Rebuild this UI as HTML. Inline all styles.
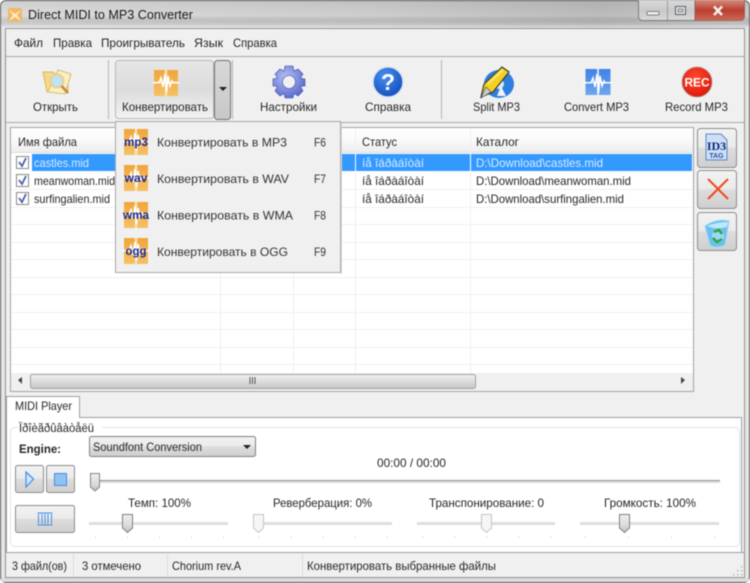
<!DOCTYPE html>
<html><head><meta charset="utf-8"><title>Direct MIDI to MP3 Converter</title>
<style>
html,body{margin:0;padding:0;background:#fff;width:750px;height:583px;overflow:hidden}
svg{display:block;filter:blur(.45px)}
text{font-family:"Liberation Sans",sans-serif;font-size:12px;fill:#262626}
</style></head><body>
<svg xmlns="http://www.w3.org/2000/svg" width="750" height="583" viewBox="0 0 750 583">
<defs>
<linearGradient id="title" x1="0" y1="0" x2="1" y2="0"><stop offset="0" stop-color="#e2e2e2"/><stop offset=".5" stop-color="#d2d2d2"/><stop offset=".8" stop-color="#c0c0c0"/><stop offset="1" stop-color="#d0d0d0"/></linearGradient>
<linearGradient id="titlev" x1="0" y1="0" x2="0" y2="1"><stop offset="0" stop-color="#000" stop-opacity=".08"/><stop offset=".55" stop-color="#000" stop-opacity=".02"/><stop offset="1" stop-color="#fff" stop-opacity=".5"/></linearGradient>
<linearGradient id="btn" x1="0" y1="0" x2="0" y2="1"><stop offset="0" stop-color="#f2f2f2"/><stop offset=".48" stop-color="#ebebeb"/><stop offset=".5" stop-color="#dddddd"/><stop offset="1" stop-color="#cfcfcf"/></linearGradient>
<linearGradient id="conv" x1="0" y1="0" x2="0" y2="1"><stop offset="0" stop-color="#e6e6e6"/><stop offset=".5" stop-color="#dcdcdc"/><stop offset="1" stop-color="#f2f2f2"/></linearGradient>
<linearGradient id="drop" x1="0" y1="0" x2="0" y2="1"><stop offset="0" stop-color="#d8d8d8"/><stop offset="1" stop-color="#c8c8c8"/></linearGradient>
<linearGradient id="hdr" x1="0" y1="0" x2="0" y2="1"><stop offset="0" stop-color="#fff"/><stop offset=".5" stop-color="#fafafa"/><stop offset="1" stop-color="#eeeeee"/></linearGradient>
<linearGradient id="thumb" x1="0" y1="0" x2="0" y2="1"><stop offset="0" stop-color="#f0f0f0"/><stop offset=".6" stop-color="#dcdcdc"/><stop offset="1" stop-color="#bcbcbc"/></linearGradient>
<linearGradient id="close" x1="0" y1="0" x2="0" y2="1"><stop offset="0" stop-color="#d68a7c"/><stop offset=".5" stop-color="#bb3f30"/><stop offset="1" stop-color="#cc6a58"/></linearGradient>
<linearGradient id="cap" x1="0" y1="0" x2="0" y2="1"><stop offset="0" stop-color="#dcdcdc"/><stop offset=".5" stop-color="#c8c8c8"/><stop offset="1" stop-color="#dadada"/></linearGradient>
<linearGradient id="sb" x1="0" y1="0" x2="0" y2="1"><stop offset="0" stop-color="#f2f2f2"/><stop offset="1" stop-color="#c6c6c6"/></linearGradient>
<radialGradient id="gear" cx=".4" cy=".35" r=".8"><stop offset="0" stop-color="#b6c0f4"/><stop offset="1" stop-color="#4a5cc4"/></radialGradient>
<radialGradient id="help" cx=".4" cy=".3" r=".8"><stop offset="0" stop-color="#4a90ee"/><stop offset="1" stop-color="#0b47b8"/></radialGradient>
<radialGradient id="rec" cx=".45" cy=".35" r=".7"><stop offset="0" stop-color="#ff4a30"/><stop offset="1" stop-color="#dc1408"/></radialGradient>
<linearGradient id="orange" x1="0" y1="0" x2="0" y2="1"><stop offset="0" stop-color="#f0a63c"/><stop offset="1" stop-color="#f6c064"/></linearGradient>
<linearGradient id="blue" x1="0" y1="0" x2="0" y2="1"><stop offset="0" stop-color="#3f83e6"/><stop offset="1" stop-color="#6ea6ee"/></linearGradient>
<g id="wave"><rect x="-12" y="-12" width="24" height="26" fill="url(#orange)"/><rect x="-1.200" y="-12" width="2.400" height="26" fill="#f7e2b6"/><rect x="-12" y="0" width="24" height="1.400" fill="#fbe6bc"/><path d="M-13 .7H-7L-5-4-3 5-1-8 .5 10 2-6 4 4 6-1 7 .7H13" fill="none" stroke="#fff" stroke-width="1.600"/></g>
</defs>

<!-- window frame -->
<rect x="0" y="0" width="750" height="583" rx="6" fill="#505050"/>
<rect x="1" y="1" width="748" height="581" rx="5" fill="#e6e6e6"/>
<rect x="1" y="1" width="748" height="27" rx="5" fill="url(#title)"/>
<rect x="1" y="1" width="748" height="27" rx="5" fill="url(#titlev)"/>
<rect x="5.500" y="28.500" width="739" height="549" fill="#f0f0f0" stroke="#929292"/>
<rect x="1" y="578" width="748" height="4" fill="#dcdcdc"/>

<!-- title -->
<g transform="translate(15,15)"><rect x="-7" y="-7" width="14" height="14" rx="2" fill="#f0b868"/><path d="M-6-5 0-1 6-5 2 0 6 6 0 2-6 6-2 0Z" fill="#fdeecb"/></g>
<text x="28" y="19" textLength="165" lengthAdjust="spacingAndGlyphs" style="font-size:13px;fill:#1a1a1a">Direct MIDI to MP3 Converter</text>
<path d="M638.500 0V16Q638.500 20.500 643 20.500H695V0Z" fill="url(#cap)" stroke="#7c7c7c"/>
<rect x="667" y="1" width="1" height="19" fill="#9a9a9a"/>
<path d="M695 0H744.500V16Q744.500 20.500 740 20.500H695Z" fill="url(#close)" stroke="#8e5a50" stroke-width=".8"/>
<rect x="647" y="11.500" width="12" height="3.500" rx="1" fill="#f2f2f2" stroke="#5a6068" stroke-width=".8"/>
<rect x="675.500" y="6.500" width="10" height="8" fill="#e4e4e4" stroke="#5a6068"/><rect x="678" y="9" width="5" height="3" fill="#c8c8c8" stroke="#5a6068" stroke-width=".6"/>
<path d="M716 6.500 724 15M724 6.500 716 15" stroke="#f4eeea" stroke-width="2.600" transform="translate(-2 0)"/>
<path d="M716 6.500 728 15.500M728 6.500 716 15.500" stroke="#f4eeea" stroke-width="2.800" style="display:none"/>

<!-- menu -->
<line x1="6" y1="56.500" x2="744" y2="56.500" stroke="#a8a8a8"/>
<text x="14" y="47" textLength="29" lengthAdjust="spacingAndGlyphs">Файл</text>
<text x="53" y="47" textLength="39" lengthAdjust="spacingAndGlyphs">Правка</text>
<text x="101" y="47" textLength="84" lengthAdjust="spacingAndGlyphs">Проигрыватель</text>
<text x="194" y="47" textLength="29" lengthAdjust="spacingAndGlyphs">Язык</text>
<text x="233" y="47" textLength="44" lengthAdjust="spacingAndGlyphs">Справка</text>

<!-- toolbar -->
<line x1="6" y1="122.500" x2="744" y2="122.500" stroke="#a8a8a8"/>
<rect x="108" y="60" width="1" height="59" fill="#b4b4b4"/><rect x="232" y="60" width="1" height="59" fill="#b4b4b4"/><rect x="441" y="60" width="1" height="59" fill="#b4b4b4"/>
<g>
<path d="M43 72H53L56 75H68V92H47Z" fill="#f5d98a" stroke="#d8b860"/>
<path d="M58 70 71 74 65 94 48 92Z" fill="#fbeec0" stroke="#d9bd70"/>
<circle cx="57" cy="81" r="6.500" fill="#bfe2f6" stroke="#e8d090" stroke-width="2"/>
<path d="M61.500 86 68 93" stroke="#c88840" stroke-width="2.600"/>
</g>
<text x="33" y="111" textLength="45" lengthAdjust="spacingAndGlyphs">Открыть</text>
<rect x="115.500" y="60.500" width="98" height="58" rx="3" fill="url(#conv)" stroke="#b8b8b8"/>
<rect x="214.500" y="60.500" width="16" height="59" rx="3" fill="url(#drop)" stroke="#707070"/>
<path d="M219 87H227L223 91Z" fill="#222"/>
<g transform="translate(166,82)"><use href="#wave"/></g>
<text x="122" y="111" textLength="86" lengthAdjust="spacingAndGlyphs">Конвертировать</text>
<g transform="translate(289,82)"><path fill="url(#gear)" stroke="#3a4cb0" stroke-width=".6" d="M-4-16H4L5-11 9-13 14-8 11.500-4 16-3V4L11.500 4.500 14 9 9 14 5 11.500 4 16H-4L-5 11.500-9 14-14 9-11.500 4.500-16 4V-3L-11.500-4-14-8-9-13-5-11Z"/><circle r="6.500" fill="#f0f0f0" stroke="#3a4cb0" stroke-width=".6"/></g>
<text x="260" y="111" textLength="57" lengthAdjust="spacingAndGlyphs">Настройки</text>
<circle cx="388" cy="82" r="15" fill="url(#help)" stroke="#d8e4f4" stroke-width="1.500"/>
<text x="388" y="90" text-anchor="middle" style="font-size:23px;font-weight:bold;fill:#fff">?</text>
<text x="365" y="111" textLength="46" lengthAdjust="spacingAndGlyphs">Справка</text>
<g>
<ellipse cx="499" cy="84" rx="15" ry="14" fill="#2e7fe0"/>
<ellipse cx="499" cy="84" rx="5" ry="5" fill="#d8ecfc"/>
<path d="M481 97 484 84 502 67 509 72 493 92Z" fill="#f5d020" stroke="#3a3a2a" stroke-width="1.200"/>
<path d="M488 84 503 70" stroke="#f8f0a0" stroke-width="1.500"/>
<path d="M481 98 486 87 491 92Z" fill="#c8ccd0" stroke="#444" stroke-width=".6"/>
<path d="M497 96 501 86 506 96Z" fill="#f2f2f2"/>
</g>
<text x="473" y="111" textLength="47" lengthAdjust="spacingAndGlyphs">Split MP3</text>
<g transform="translate(598,82)"><rect x="-12.500" y="-13" width="25" height="26" fill="url(#blue)"/><rect x="-1" y="-13" width="2" height="26" fill="#d4e4fa"/><rect x="-12.500" y="0" width="25" height="1.400" fill="#cfe0f8"/><path d="M-15 .7H-7L-5-4-3 5-1-8 .5 11 2-6 4 4 6-1 7 .7H15" fill="none" stroke="#fff" stroke-width="1.500"/></g>
<text x="564" y="111" textLength="65" lengthAdjust="spacingAndGlyphs">Convert MP3</text>
<circle cx="697" cy="82" r="15" fill="url(#rec)" stroke="#a8a0a0" stroke-width=".8"/>
<text x="697" y="86.500" text-anchor="middle" textLength="25" lengthAdjust="spacingAndGlyphs" style="font-size:12px;font-weight:bold;fill:#fff">REC</text>
<text x="665" y="111" textLength="63" lengthAdjust="spacingAndGlyphs">Record MP3</text>

<!-- list -->
<rect x="10.500" y="127.500" width="683" height="264" fill="#fff" stroke="#a0a4a8"/>
<rect x="11" y="128" width="682" height="24" fill="url(#hdr)"/>
<line x1="11" y1="152.500" x2="693" y2="152.500" stroke="#dcdcdc"/>
<g stroke="#f0f0f0" shape-rendering="crispEdges">
<line x1="11" y1="189.500" x2="693" y2="189.500"/><line x1="11" y1="207.500" x2="693" y2="207.500"/><line x1="11" y1="224.500" x2="693" y2="224.500"/><line x1="11" y1="242.500" x2="693" y2="242.500"/><line x1="11" y1="259.500" x2="693" y2="259.500"/><line x1="11" y1="277.500" x2="693" y2="277.500"/><line x1="11" y1="294.500" x2="693" y2="294.500"/><line x1="11" y1="312.500" x2="693" y2="312.500"/><line x1="11" y1="329.500" x2="693" y2="329.500"/><line x1="11" y1="347.500" x2="693" y2="347.500"/><line x1="11" y1="364.500" x2="693" y2="364.500"/>
<line x1="220.500" y1="128" x2="220.500" y2="374"/><line x1="293.500" y1="128" x2="293.500" y2="374"/><line x1="355.500" y1="128" x2="355.500" y2="374"/><line x1="470.500" y1="128" x2="470.500" y2="374"/>
</g>
<rect x="32" y="154" width="660" height="17" fill="#3399ff"/>
<rect x="355" y="154" width="1" height="17" fill="#fff"/><rect x="470" y="154" width="1" height="17" fill="#fff"/>
<text x="18" y="146" textLength="59" lengthAdjust="spacingAndGlyphs">Имя файла</text>
<text x="362" y="146" textLength="35" lengthAdjust="spacingAndGlyphs">Статус</text>
<text x="476" y="146" textLength="43" lengthAdjust="spacingAndGlyphs">Каталог</text>
<g fill="#fff" stroke="#888">
<rect x="16.500" y="156.500" width="12" height="12"/><rect x="16.500" y="174.500" width="12" height="12"/><rect x="16.500" y="192.500" width="12" height="12"/>
</g>
<g fill="none" stroke="#4a62b0" stroke-width="1.800">
<path d="M19 162 22 166 26 158"/><path d="M19 180 22 184 26 176"/><path d="M19 198 22 202 26 194"/>
</g>
<text x="34" y="167" textLength="55" lengthAdjust="spacingAndGlyphs" style="fill:#d6ecff">castles.mid</text>
<text x="34" y="185" textLength="81" lengthAdjust="spacingAndGlyphs">meanwoman.mid</text>
<text x="34" y="203" textLength="76" lengthAdjust="spacingAndGlyphs">surfingalien.mid</text>
<text x="362" y="167" textLength="62" lengthAdjust="spacingAndGlyphs" style="fill:#d6ecff">íå îáðàáîòàí</text>
<text x="362" y="185" textLength="62" lengthAdjust="spacingAndGlyphs">íå îáðàáîòàí</text>
<text x="362" y="203" textLength="62" lengthAdjust="spacingAndGlyphs">íå îáðàáîòàí</text>
<text x="476" y="167" textLength="127" lengthAdjust="spacingAndGlyphs" style="fill:#d6ecff">D:\Download\castles.mid</text>
<text x="476" y="185" textLength="155" lengthAdjust="spacingAndGlyphs">D:\Download\meanwoman.mid</text>
<text x="476" y="203" textLength="148" lengthAdjust="spacingAndGlyphs">D:\Download\surfingalien.mid</text>

<!-- scrollbar -->
<rect x="11" y="373" width="682" height="18" fill="#f0f0f0"/>
<rect x="30.500" y="374.500" width="445" height="14" rx="2" fill="url(#sb)" stroke="#a0a0a0"/>
<path d="M18 380 22 377V384Z" fill="#444"/><path d="M685 380 681 377V384Z" fill="#444"/>
<path d="M250 377V384M252.500 377V384M255 377V384" stroke="#555" stroke-width="1"/>

<!-- side buttons -->
<g stroke="#8c8c8c" fill="url(#btn)">
<rect x="697.500" y="128.500" width="39" height="39" rx="3"/><rect x="697.500" y="170.500" width="39" height="38" rx="3"/><rect x="697.500" y="212.500" width="39" height="38" rx="3"/>
</g>
<path d="M706 134H721L727 140V160H706Z" fill="#cddff6" stroke="#5f86c8"/>
<text x="716.500" y="150" text-anchor="middle" style="font-family:'Liberation Serif',serif;font-size:12px;font-weight:bold;fill:#0e2a80">ID3</text>
<text x="716.500" y="158" text-anchor="middle" style="font-size:7px;font-weight:bold;fill:#2f52a8">TAG</text>
<path d="M708 179 728 199M728 179 708 199" stroke="#ef4a1e" stroke-width="2"/>
<path d="M705 226Q717 218 729 221L725 245Q716 249 710 245Z" fill="#6cc0ee" stroke="#9ad8f6"/>
<path d="M707 226Q717 222 728 222L727 227Q716 230 707 226Z" fill="#bfe8fa"/>
<circle cx="718" cy="236" r="6" fill="#ffffff" opacity=".35"/>
<path d="M714 232 719 230 722 234M722 239 717 242 713 238" fill="none" stroke="#2aa83c" stroke-width="2.400"/>

<!-- popup -->
<rect x="115.500" y="121.500" width="225" height="151" fill="#f0f0f0" stroke="#a8a8a8"/>
<rect x="341" y="123" width="1" height="151" fill="#d8d8d8"/>
<g transform="translate(136,141)"><use href="#wave"/></g>
<g transform="translate(136,177)"><use href="#wave"/></g>
<g transform="translate(136,214)"><use href="#wave"/></g>
<g transform="translate(136,250)"><use href="#wave"/></g>
<text x="136" y="146" text-anchor="middle" textLength="24" lengthAdjust="spacingAndGlyphs" style="font-weight:bold;fill:#1a2a90">mp3</text>
<text x="136" y="182" text-anchor="middle" textLength="23" lengthAdjust="spacingAndGlyphs" style="font-weight:bold;fill:#1a2a90">wav</text>
<text x="136" y="219" text-anchor="middle" textLength="26" lengthAdjust="spacingAndGlyphs" style="font-weight:bold;fill:#1a2a90">wma</text>
<text x="136" y="255" text-anchor="middle" textLength="21" lengthAdjust="spacingAndGlyphs" style="font-weight:bold;fill:#1a2a90">ogg</text>
<text x="157" y="146.500" textLength="130" lengthAdjust="spacingAndGlyphs" style="fill:#333">Конвертировать в MP3</text>
<text x="157" y="183" textLength="132" lengthAdjust="spacingAndGlyphs" style="fill:#333">Конвертировать в WAV</text>
<text x="157" y="219.500" textLength="136" lengthAdjust="spacingAndGlyphs" style="fill:#333">Конвертировать в WMA</text>
<text x="157" y="256" textLength="131" lengthAdjust="spacingAndGlyphs" style="fill:#333">Конвертировать в OGG</text>
<text x="314" y="146.500" textLength="12" lengthAdjust="spacingAndGlyphs" style="fill:#333">F6</text>
<text x="314" y="183" textLength="12" lengthAdjust="spacingAndGlyphs" style="fill:#333">F7</text>
<text x="314" y="219.500" textLength="12" lengthAdjust="spacingAndGlyphs" style="fill:#333">F8</text>
<text x="314" y="256" textLength="12" lengthAdjust="spacingAndGlyphs" style="fill:#333">F9</text>

<!-- tab panel -->
<rect x="6.500" y="417.500" width="735" height="135" fill="#fff" stroke="#a0a0a0"/>
<path d="M6.500 417.500V396.500H79.500V417.500" fill="#fff" stroke="#a0a0a0"/>
<rect x="7" y="417" width="72" height="2" fill="#fff"/>
<text x="15" y="410" textLength="57" lengthAdjust="spacingAndGlyphs">MIDI Player</text>
<rect x="10.500" y="427.500" width="729" height="119" rx="4" fill="#fff" stroke="#dde2e8"/>
<rect x="18" y="423" width="84" height="9" fill="#fff"/>
<text x="19" y="432" textLength="75" lengthAdjust="spacingAndGlyphs" style="font-size:11.500px">Ïðîèãðûâàòåëü</text>
<text x="19" y="453" textLength="42" lengthAdjust="spacingAndGlyphs" style="font-weight:bold">Engine:</text>
<rect x="89.500" y="436.500" width="166" height="20" rx="2" fill="url(#btn)" stroke="#808080"/>
<text x="93" y="451" textLength="109" lengthAdjust="spacingAndGlyphs">Soundfont Conversion</text>
<path d="M243 445H251L247 449Z" fill="#222"/>
<text x="377" y="467" textLength="69" lengthAdjust="spacingAndGlyphs">00:00 / 00:00</text>
<rect x="15.500" y="465.500" width="28" height="27" rx="2" fill="url(#btn)" stroke="#8c8c8c"/>
<rect x="46.500" y="465.500" width="28" height="27" rx="2" fill="url(#btn)" stroke="#8c8c8c"/>
<path d="M26 472 33.500 479 26 487Z" fill="#cfe6fb" stroke="#3f8ee4" stroke-width="1.200"/>
<rect x="54.500" y="473.500" width="12" height="12" fill="#8fc4f2" stroke="#3f8ee4"/>
<rect x="15.500" y="505.500" width="59" height="27" rx="2" fill="url(#btn)" stroke="#8c8c8c"/>
<g fill="none" stroke="#3f8ee4"><path d="M37.500 513H52.500M37.500 525H52.500"/><path d="M38.500 514V524M42 514V524M45 514V524M48 514V524M51.500 514V524"/></g>

<!-- sliders -->
<rect x="90" y="480" width="630" height="1" fill="#909090"/><rect x="90" y="481" width="630" height="2" fill="#dcdcdc"/>
<path d="M90.500 473.500H99.500V487L95 491 90.500 487Z" fill="url(#thumb)" stroke="#858585"/>
<g fill="#dcdfe0">
<rect x="89" y="522" width="139" height="3"/><rect x="258" y="522" width="134" height="3"/><rect x="417" y="522" width="138" height="3"/><rect x="580" y="522" width="139" height="3"/>
</g>
<g fill="#bcbcbc">
<rect x="95" y="537" width="1" height="1"/><rect x="127" y="537" width="1" height="1"/><rect x="159" y="537" width="1" height="1"/><rect x="191" y="537" width="1" height="1"/><rect x="223" y="537" width="1" height="1"/>
<rect x="258" y="537" width="1" height="1"/><rect x="291" y="537" width="1" height="1"/><rect x="323" y="537" width="1" height="1"/><rect x="355" y="537" width="1" height="1"/><rect x="387" y="537" width="1" height="1"/>
<rect x="422" y="537" width="1" height="1"/><rect x="454" y="537" width="1" height="1"/><rect x="486" y="537" width="1" height="1"/><rect x="518" y="537" width="1" height="1"/><rect x="550" y="537" width="1" height="1"/>
<rect x="585" y="537" width="1" height="1"/><rect x="628" y="537" width="1" height="1"/><rect x="671" y="537" width="1" height="1"/><rect x="714" y="537" width="1" height="1"/>
</g>
<path d="M122.500 514.500H132.500V528L127.500 532.500 122.500 528Z" fill="url(#thumb)" stroke="#808080"/>
<path d="M253.500 514.500H263.500V528L258.500 532.500 253.500 528Z" fill="#f6f6f6" stroke="#c4c4c4"/>
<path d="M481.500 514.500H491.500V528L486.500 532.500 481.500 528Z" fill="#f6f6f6" stroke="#c4c4c4"/>
<path d="M619.500 514.500H629.500V528L624.500 532.500 619.500 528Z" fill="url(#thumb)" stroke="#808080"/>
<text x="128" y="507" textLength="63" lengthAdjust="spacingAndGlyphs">Темп: 100%</text>
<text x="273" y="507" textLength="99" lengthAdjust="spacingAndGlyphs">Реверберация: 0%</text>
<text x="429" y="507" textLength="115" lengthAdjust="spacingAndGlyphs">Транспонирование: 0</text>
<text x="604" y="507" textLength="92" lengthAdjust="spacingAndGlyphs">Громкость: 100%</text>

<!-- status -->
<rect x="6" y="553" width="738" height="24" fill="#f0f0f0"/>
<line x1="6" y1="552.500" x2="744" y2="552.500" stroke="#a0a0a0"/>
<rect x="73" y="554" width="1" height="23" fill="#dcdcdc"/><rect x="167" y="554" width="1" height="23" fill="#dcdcdc"/><rect x="302" y="554" width="1" height="23" fill="#dcdcdc"/>
<text x="12" y="570" textLength="55" lengthAdjust="spacingAndGlyphs">3 файл(ов)</text>
<text x="82" y="570" textLength="59" lengthAdjust="spacingAndGlyphs">3 отмечено</text>
<text x="172" y="570" textLength="69" lengthAdjust="spacingAndGlyphs">Chorium rev.A</text>
<text x="307" y="570" textLength="189" lengthAdjust="spacingAndGlyphs">Конвертировать выбранные файлы</text>
<g fill="#b8b8b8"><rect x="741" y="566" width="1.500" height="1.500"/><rect x="737" y="570" width="1.500" height="1.500"/><rect x="741" y="570" width="1.500" height="1.500"/><rect x="733" y="574" width="1.500" height="1.500"/><rect x="737" y="574" width="1.500" height="1.500"/><rect x="741" y="574" width="1.500" height="1.500"/></g>
</svg>
</body></html>
